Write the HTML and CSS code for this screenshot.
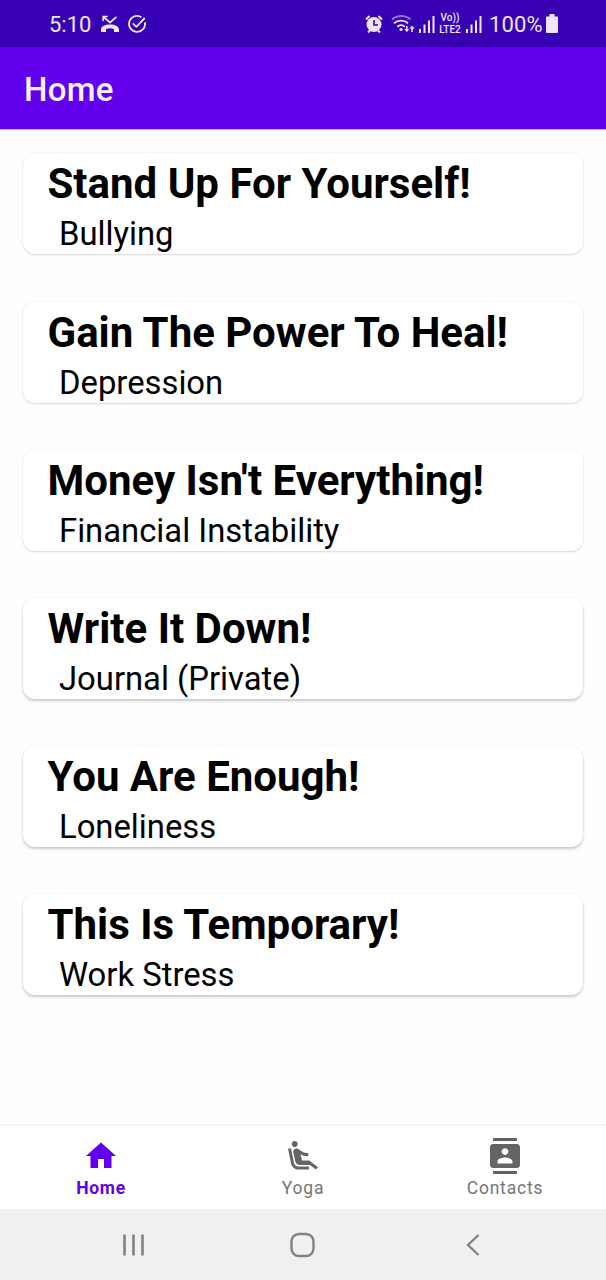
FILE: index.html
```html
<!DOCTYPE html>
<html lang="en">
<head>
    <meta charset="utf-8">
    <title>Home</title>
    <link rel="stylesheet" href="styles.css">
</head>
<body>
    <div class="status-bar">
        <span class="clock">5:10</span>
        <svg class="missed" width="18" height="18" viewBox="0 0 18 18">
            <path d="M2.200 6V1.500h4.500M2.500 1.800L9 7.500l6.500-5.700" fill="none" stroke="currentColor" stroke-width="1.700"/>
            <path d="M0 14.500C0 11.500 4 9.500 9 9.500s9 2 9 5V17h-5v-3c-2.500-1-5.500-1-8 0v3H0z" fill="currentColor"/>
        </svg>
        <svg class="check" width="20" height="20" viewBox="0 0 20 20" fill="none" stroke="currentColor" stroke-width="1.800">
            <path d="M14.500 3.200A8 8 0 1 0 17.900 8.300M5.800 9.300l3.500 3.500 8.500-8.800"/>
        </svg>
        <div class="status-right">
            <svg class="alarm" width="18" height="18" viewBox="0 0 18 18">
                <circle cx="9" cy="9.500" r="7.500" fill="currentColor"/>
                <path d="M1 4.500L4.500 1M17 4.500L13.500 1M3 17.500l2-2M15 17.500l-2-2" stroke="currentColor" stroke-width="2"/>
                <path d="M9 5v5h4" fill="none" stroke="#3700b3" stroke-width="1.600"/>
            </svg>
            <svg class="wifi" width="24" height="18" viewBox="0 0 24 18" fill="none" stroke="currentColor" stroke-width="1.900">
                <path d="M1 4.500a14 14 0 0 1 18.500 0" opacity=".5"/>
                <path d="M3 8.300a10.500 10.500 0 0 1 14 0M6.300 11.800a5.500 5.500 0 0 1 7.500 0"/>
                <circle cx="10" cy="14.500" r="1.500" fill="currentColor" stroke="none"/>
                <path d="M15.800 11v4M21 17v-4" stroke-width="1.500"/>
                <path d="M13.300 14h5l-2.500 3.200zM18.500 13.700h5L21 10.500z" fill="currentColor" stroke="none"/>
            </svg>
            <svg class="signal" width="16" height="18" viewBox="0 0 16 18" fill="currentColor">
                <path d="M0 14h2v4H0zM4.500 9.500h2V18h-2zM9 5.500h2V18H9zM13.500 1h2v17h-2z"/>
            </svg>
            <span class="volte"><span>Vo))</span><span>LTE2</span></span>
            <svg class="signal" width="16" height="18" viewBox="0 0 16 18" fill="currentColor">
                <path d="M0 14h2v4H0zM4.500 9.500h2V18h-2zM9 5.500h2V18H9zM13.500 1h2v17h-2z"/>
            </svg>
            <span class="percent">100%</span>
            <svg class="battery" width="12" height="19" viewBox="0 0 12 19" fill="currentColor">
                <path d="M3.500 0h5v2.500H11a1 1 0 0 1 1 1V18a1 1 0 0 1-1 1H1a1 1 0 0 1-1-1V3.500a1 1 0 0 1 1-1h2.500z"/>
            </svg>
        </div>
    </div>

    <header class="app-bar">Home</header>

    <main class="list">
        <div class="card">
            <h2>Stand Up For Yourself!</h2>
            <p>Bullying</p>
        </div>
        <div class="card">
            <h2>Gain The Power To Heal!</h2>
            <p>Depression</p>
        </div>
        <div class="card">
            <h2>Money Isn't Everything!</h2>
            <p>Financial Instability</p>
        </div>
        <div class="card low">
            <h2>Write It Down!</h2>
            <p>Journal (Private)</p>
        </div>
        <div class="card low">
            <h2>You Are Enough!</h2>
            <p>Loneliness</p>
        </div>
        <div class="card low">
            <h2>This Is Temporary!</h2>
            <p>Work Stress</p>
        </div>
    </main>

    <nav class="bottom-nav">
        <a class="tab active">
            <svg viewBox="0 0 24 24"><path d="M10 20v-6h4v6h5v-8h3L12 3 2 12h3v8z"/></svg>
            <span>Home</span>
        </a>
        <a class="tab">
            <svg viewBox="0 0 24 24"><path d="M5.350 5.640c-.9-.64-1.120-1.880-.49-2.790.63-.9 1.880-1.120 2.790-.49.9.64 1.120 1.880.49 2.790-.64.9-1.880 1.120-2.790.49zM16 19H8.930c-1.480 0-2.740-1.080-2.960-2.540L4 7H2l1.990 9.760C4.370 19.200 6.470 21 8.940 21H16v-2zm.23-4h-4.880l-1.030-4.100c1.580.89 3.280 1.540 5.150 1.220V9.990c-1.630.31-3.440-.27-4.690-1.250L9.140 7.470c-.23-.18-.49-.3-.76-.38-.32-.09-.66-.12-.99-.06h-.02c-1.230.22-2.050 1.390-1.840 2.610l1.350 5.920C7.160 16.980 8.390 18 9.830 18h6.850l3.820 3 1.500-1.500-5.770-4.500z"/></svg>
            <span>Yoga</span>
        </a>
        <a class="tab">
            <svg viewBox="0 0 24 24"><path d="M20 0H4v2h16V0zM4 24h16v-2H4v2zM20 4H4c-1.100 0-2 .9-2 2v12c0 1.100.9 2 2 2h16c1.100 0 2-.9 2-2V6c0-1.100-.9-2-2-2zm-8 2.750c1.240 0 2.250 1.010 2.250 2.250s-1.010 2.250-2.250 2.250S9.750 10.240 9.750 9 10.760 6.750 12 6.750zM17 17H7v-1.500c0-1.670 3.330-2.500 5-2.500s5 .83 5 2.500V17z"/></svg>
            <span>Contacts</span>
        </a>
    </nav>

    <div class="system-nav">
        <svg width="24" height="24" viewBox="0 0 24 24"><path d="M3.500 1.500v21M12.500 1.500v21M21.500 1.500v21" stroke-width="2.600"/></svg>
        <svg width="26" height="26" viewBox="0 0 26 26"><rect x="1.500" y="2" width="22" height="22" rx="7.500"/></svg>
        <svg width="24" height="24" viewBox="0 0 24 24"><path d="M17.500 2L7 12l10.500 10"/></svg>
    </div>
</body>
</html>
```
FILE: styles.css
```css
* { box-sizing: border-box; }
body { margin: 0; height: 1280px; display: flex; flex-direction: column; overflow: hidden; background: #fefefe; font-family: Roboto, "Liberation Sans", sans-serif; color: #000; }

.status-bar { display: flex; align-items: center; height: 47px; padding: 0 48px 0 49px; background: #3700b3; color: #efe5fc; }
.clock { width: 42px; font-size: 22px; padding-top: 2px; }
.missed { margin-left: 10px; }
.check { margin-left: 8px; }
.status-right { display: flex; align-items: center; margin-left: auto; }
.wifi { margin-left: 8px; }
.signal { margin-left: 4px; }
.volte { display: flex; flex-direction: column; align-items: center; width: 24px; margin-left: 3px; font-size: 10px; font-weight: 500; line-height: 12px; }
.percent { width: 53px; margin-left: 7px; padding-top: 2px; font-size: 22px; letter-spacing: 0.1px; }
.battery { margin-left: 4px; }

.app-bar { height: 83px; padding: 1px 24px 0; line-height: 84px; background: #6200ee; color: #f8f2ff; font-size: 33px; font-weight: 500; letter-spacing: 0.3px; border-bottom: 1px solid #c9b0ee; }

.list { flex: 1; padding: 23.400px 23px 0; }
.card { height: 101px; margin-bottom: 47.200px; padding: 6px 24px 0; background: #fff; border-radius: 12px; box-shadow: 0 1px 2px rgba(0,0,0,.13), 0 0 2px rgba(0,0,0,.1); }
.card.low { box-shadow: 0 2px 3px rgba(0,0,0,.2), 0 0 2px rgba(0,0,0,.08); }
.card h2 { margin: 0; padding-left: 0.500px; font-size: 42px; line-height: 49px; font-weight: 700; white-space: nowrap; }
.card p { margin: 0; padding-left: 12px; font-size: 32.800px; line-height: 53px; }

.bottom-nav { display: flex; height: 85px; border-top: 2px solid #f5f5f5; background: #fff; }
.tab { flex: 1; display: flex; flex-direction: column; align-items: center; padding-top: 12px; color: #757575; font-size: 17.500px; letter-spacing: 0.8px; }
.tab svg { width: 36px; height: 36px; fill: #646464; }
.tab span { margin-top: 4px; line-height: 20px; }
.tab.active { color: #6200ee; font-weight: 700; letter-spacing: 0.7px; }
.tab.active svg { fill: #6200ee; }

.system-nav { display: flex; align-items: center; justify-content: space-between; height: 71px; padding: 0 121px; background: #f0f0f0; }
.system-nav svg { fill: none; stroke: #828282; stroke-width: 2.400; }
```
